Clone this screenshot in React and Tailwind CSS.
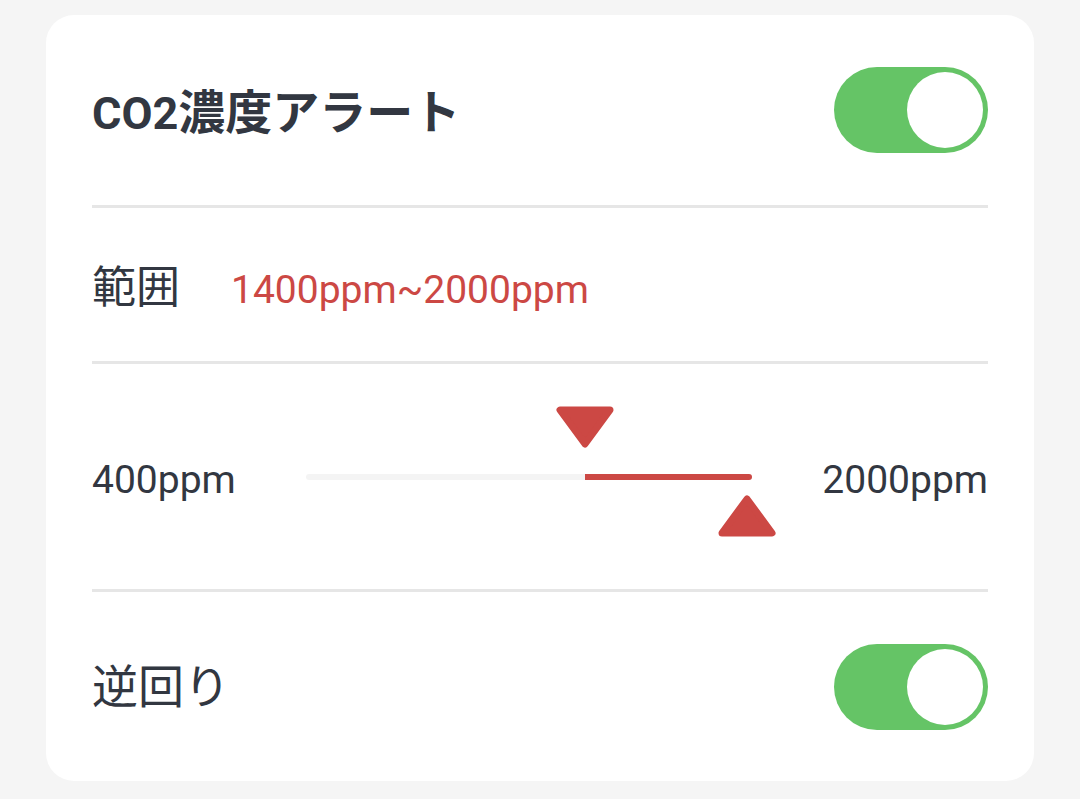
import React, { useState } from "react";

const Toggle = ({ on, onChange }) => (
  <button
    onClick={() => onChange(!on)}
    className={`flex h-[86px] w-[154px] shrink-0 items-center rounded-full p-[5px] ${
      on ? "justify-end bg-[#65c466]" : "justify-start bg-[#e6e6e6]"
    }`}
  >
    <span className="block h-[76px] w-[76px] rounded-full bg-white" />
  </button>
);

// rounded triangle handle for the range slider
const Handle = ({ down }) => (
  <svg width="58" height="42" viewBox="0 0 58 42">
    <polygon
      points={down ? "4,4 54,4 29,38" : "29,4 54,38 4,38"}
      fill="#cc4844"
      stroke="#cc4844"
      strokeWidth="7"
      strokeLinejoin="round"
    />
  </svg>
);

const Divider = () => <div className="h-[3px] bg-[#e6e6e6]" />;

export default function App() {
  const [alertOn, setAlertOn] = useState(true);
  const [reverse, setReverse] = useState(true);
  const min = 400;
  const max = 2000;
  const low = 1400;
  const high = 2000;
  const lowPct = ((low - min) / (max - min)) * 100;

  return (
    <div
      className="min-h-screen bg-[#f5f5f5] px-[46px] pt-[15px] text-[#323741]"
      style={{ fontFamily: '"Roboto", "Noto Sans CJK JP", sans-serif' }}
    >
      <div className="rounded-[28px] bg-white px-[46px]">
        {/* header */}
        <div className="flex h-[190px] items-center justify-between">
          <div className="pt-[6px] text-[45px] font-bold">
            CO2<span className="text-[47px]">濃度アラート</span>
          </div>
          <Toggle on={alertOn} onChange={setAlertOn} />
        </div>
        <Divider />

        {/* range text */}
        <div className="flex h-[153px] items-baseline pt-[47px] text-[39px]">
          <span className="text-[44px]">範囲</span>
          <span className="ml-[51px] text-[#cc4844]">
            {low}ppm~{high}ppm
          </span>
        </div>
        <Divider />

        {/* slider */}
        <div className="flex h-[225px] items-center text-[39px]">
          <span className="pt-[7px]">{min}ppm</span>
          <div className="relative mx-[70px] h-[6px] flex-1 rounded-full bg-[#f4f4f4]">
            <div
              className="absolute inset-y-0 right-0 rounded-r-full bg-[#cc4844]"
              style={{ left: `${lowPct}%` }}
            />
            <div
              className="absolute top-[-68px]"
              style={{ left: `calc(${lowPct}% - 29px)` }}
            >
              <Handle down />
            </div>
            <div className="absolute left-[calc(100%-34px)] top-[21px]">
              <Handle />
            </div>
          </div>
          <span className="pt-[7px]">{max}ppm</span>
        </div>
        <Divider />

        {/* reverse */}
        <div className="flex h-[189px] items-center justify-between">
          <span className="pt-[2px] text-[46px]">逆回り</span>
          <Toggle on={reverse} onChange={setReverse} />
        </div>
      </div>
    </div>
  );
}
